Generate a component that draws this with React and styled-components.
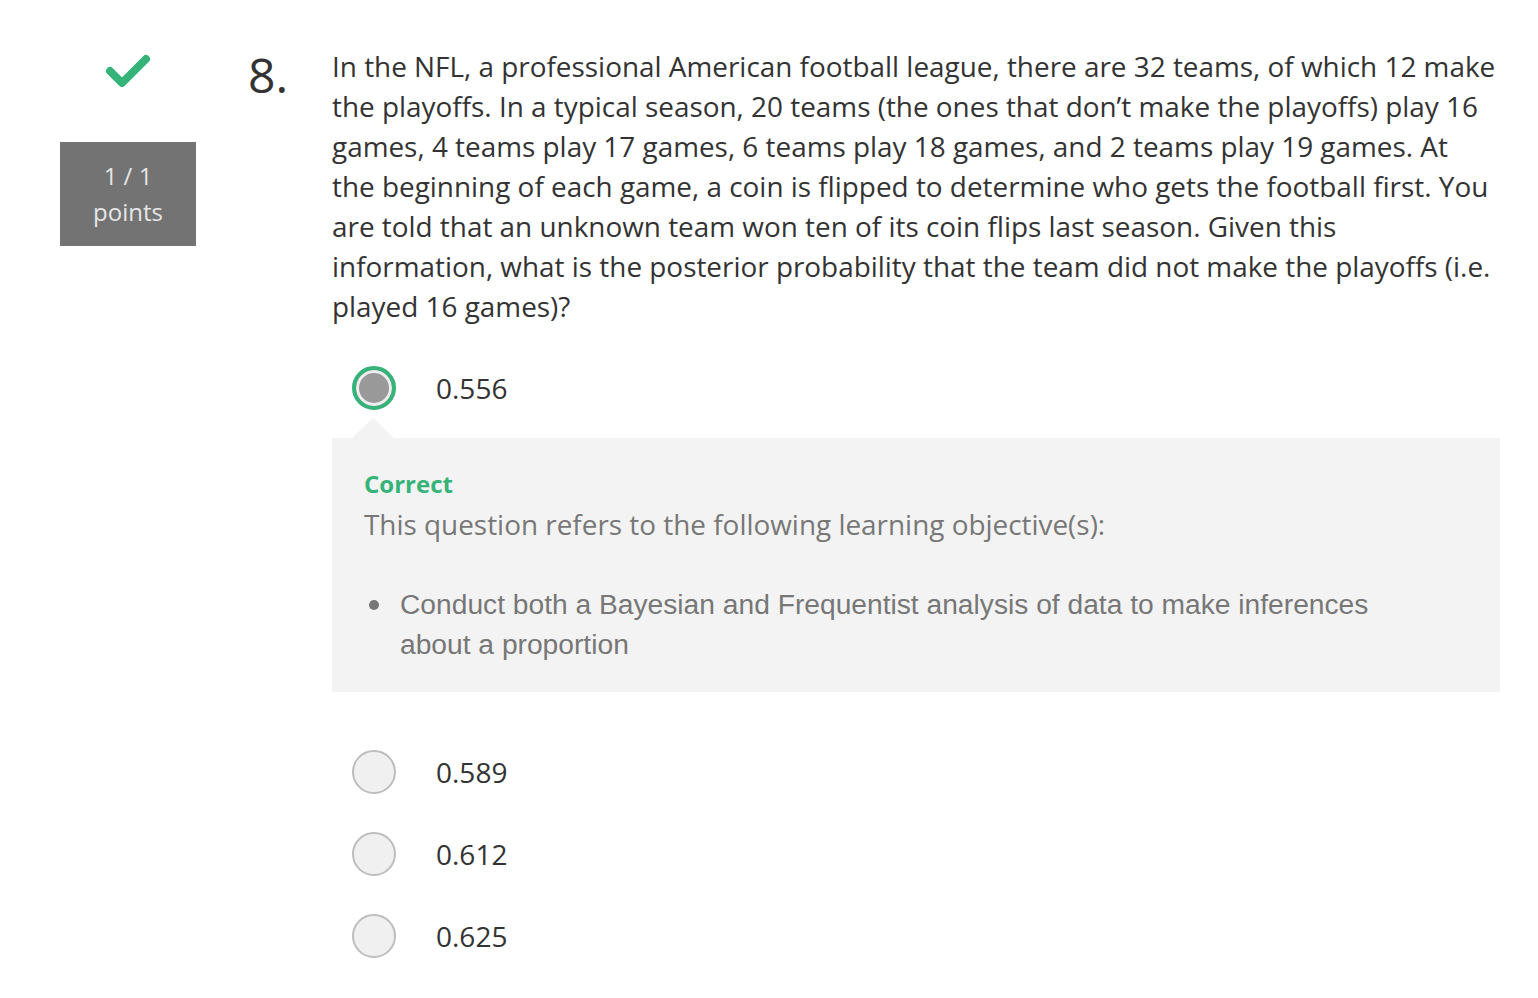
import React from "react";
import styled, { createGlobalStyle } from "styled-components";

const Global = createGlobalStyle`
  body {
    margin: 0;
    background: #ffffff;
    font-family: "Open Sans", "Liberation Sans", sans-serif;
  }
`;

const Page = styled.div`
  display: flex;
  align-items: flex-start;
  padding: 46px 38px 0 60px;
`;

const Side = styled.div`
  width: 136px;
  display: flex;
  flex-direction: column;
  align-items: center;
  gap: 52px;
  padding-top: 6px;
`;

const Points = styled.div`
  width: 136px;
  height: 104px;
  background: #737373;
  color: #e6e6e6;
  font-size: 24px;
  line-height: 36px;
  display: flex;
  flex-direction: column;
  align-items: center;
  justify-content: center;
`;

const Num = styled.div`
  width: 84px;
  margin-left: 52px;
  font-size: 48px;
  line-height: 58px;
  color: #333;
`;

const Main = styled.div`
  flex: 1;
`;

const Question = styled.p`
  margin: 0;
  font-size: 27.9px;
  line-height: 40px;
  color: #333;
  white-space: nowrap;
`;

const Options = styled.div`
  margin-top: 40px;
`;

const Option = styled.div`
  display: flex;
  align-items: center;
  height: 44px;
  padding-left: 20px;
  margin-bottom: ${(p) => p.$gap || 38}px;
`;

const Radio = styled.span`
  width: 44px;
  height: 44px;
  box-sizing: border-box;
  border-radius: 50%;
  flex-shrink: 0;
  ${(p) =>
    p.$checked
      ? `border: 4px solid #35b378; background: #999; box-shadow: inset 0 0 0 3px #eeeeee;`
      : `border: 2px solid #bdbdbd; background: #f0f0f0;`}
`;

const Label = styled.span`
  margin-left: 40px;
  font-size: 28px;
  color: #333;
`;

const Feedback = styled.div`
  position: relative;
  background: #f3f3f3;
  margin-bottom: 58px;
  padding: 28px 32px 28px 32px;
  &::before {
    content: "";
    position: absolute;
    top: -20px;
    left: 20px;
    border-left: 21px solid transparent;
    border-right: 21px solid transparent;
    border-bottom: 20px solid #f3f3f3;
  }
`;

const Correct = styled.div`
  color: #35b378;
  font-weight: 700;
  font-size: 24px;
  line-height: 36px;
`;

const Refers = styled.div`
  color: #777;
  font-size: 27.9px;
  line-height: 44px;
`;

const List = styled.ul`
  margin: 38px 0 0;
  padding: 0;
  list-style: none;
  font-family: "Liberation Sans", Arial, sans-serif;
  color: #777;
  font-size: 28.2px;
  line-height: 40px;
`;

const Item = styled.li`
  position: relative;
  padding-left: 36px;
  &::before {
    content: "";
    position: absolute;
    left: 5px;
    top: 16px;
    width: 10px;
    height: 10px;
    border-radius: 50%;
    background: #777;
  }
`;

function Check() {
  return (
    <svg width="48" height="38" viewBox="0 0 48 38">
      <path
        d="M6 19 L18 31 L42 7"
        fill="none"
        stroke="#35b378"
        strokeWidth="8"
        strokeLinecap="round"
        strokeLinejoin="round"
      />
    </svg>
  );
}

export default function App() {
  return (
    <>
      <Global />
      <Page>
        <Side>
          <Check />
          <Points>
            <span>1 / 1</span>
            <span>points</span>
          </Points>
        </Side>
        <Num>8.</Num>
        <Main>
          <Question>
            In the NFL, a professional American football league, there are 32 teams, of which 12 make
            <br />
            the playoffs. In a typical season, 20 teams (the ones that don’t make the playoffs) play 16
            <br />
            games, 4 teams play 17 games, 6 teams play 18 games, and 2 teams play 19 games. At
            <br />
            the beginning of each game, a coin is flipped to determine who gets the football first. You
            <br />
            are told that an unknown team won ten of its coin flips last season. Given this
            <br />
            information, what is the posterior probability that the team did not make the playoffs (i.e.
            <br />
            played 16 games)?
          </Question>
          <Options>
            <Option $gap={28}>
              <Radio $checked />
              <Label>0.556</Label>
            </Option>
            <Feedback>
              <Correct>Correct</Correct>
              <Refers>This question refers to the following learning objective(s):</Refers>
              <List>
                <Item>
                  Conduct both a Bayesian and Frequentist analysis of data to make inferences
                  <br />
                  about a proportion
                </Item>
              </List>
            </Feedback>
            <Option>
              <Radio />
              <Label>0.589</Label>
            </Option>
            <Option>
              <Radio />
              <Label>0.612</Label>
            </Option>
            <Option>
              <Radio />
              <Label>0.625</Label>
            </Option>
          </Options>
        </Main>
      </Page>
    </>
  );
}
